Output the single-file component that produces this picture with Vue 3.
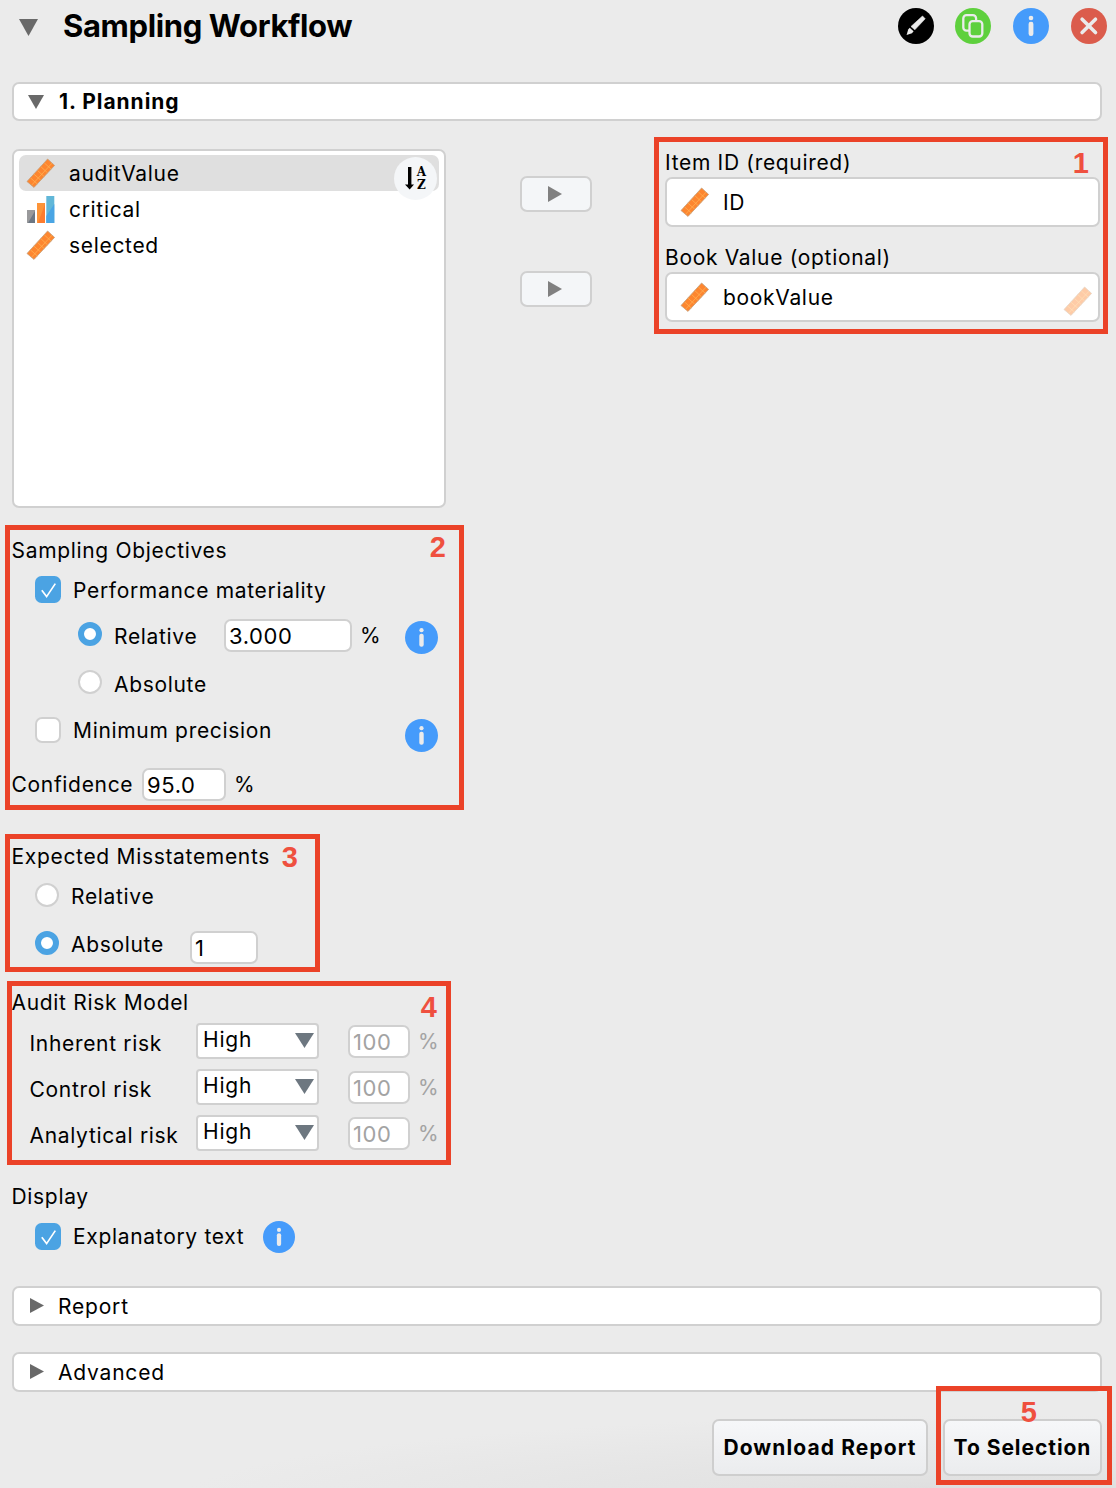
<script setup>
import { h } from 'vue'

const variables = [
  { name: 'auditValue', type: 'scale', active: true },
  { name: 'critical', type: 'ordinal', active: false },
  { name: 'selected', type: 'scale', active: false },
]
const fields = [
  { label: 'Item ID (required)', value: 'ID', hint: false },
  { label: 'Book Value (optional)', value: 'bookValue', hint: true },
]
const risks = ['Inherent risk', 'Control risk', 'Analytical risk']

const ScaleIcon = () =>
  h('svg', { width: 30, height: 30, viewBox: '0 0 30 30' }, [
    h('path', { d: 'M1 23.5 21.6 1 28.6 7.4 8 29.4Z', fill: '#fd8630' }),
    h('path', {
      d: 'M5.6 27.2 26.2 5M4.4 19.8 11.4 26M7.8 16 14.9 22.3M11.3 12.3 18.3 18.7M14.7 8.5 21.7 15M18.2 4.8 25.2 11.2',
      fill: 'none',
      stroke: '#ffb052',
      'stroke-width': 0.8,
    }),
    h('path', { d: 'M1 23.5 21.6 1 28.6 7.4 8 29.4Z', fill: 'none', stroke: '#c4a07c', 'stroke-width': 0.8 }),
  ])

const InfoIcon = (props) =>
  h('svg', { width: props.size, height: props.size, viewBox: '0 0 36 36' }, [
    h('circle', { cx: 18, cy: 18, r: 18, fill: '#459bfb' }),
    h('circle', { cx: 18, cy: 10, r: 2.3, fill: '#ebebeb' }),
    h('rect', { x: 15.6, y: 13.8, width: 4.8, height: 14.2, rx: 2.2, fill: '#ebebeb' }),
  ])
InfoIcon.props = ['size']

const CheckMark = () =>
  h('svg', { width: 26, height: 27, viewBox: '0 0 26 27' }, [
    h('rect', { width: 26, height: 27, rx: 6.5, fill: '#4ba3e3' }),
    h('path', { d: 'M6.8 14.3 11.6 20.6 20.3 7.6', fill: 'none', stroke: '#fff', 'stroke-width': 1.7 }),
  ])
</script>

<template>
  <main class="panel">
    <header class="header">
      <svg class="title-arrow" width="19" height="17" viewBox="0 0 19 17"><path d="M0 0H19L9.5 17Z" fill="#696969" /></svg>
      <h1>Sampling Workflow</h1>
      <div class="tools">
        <svg class="edit" width="36" height="36" viewBox="0 0 36 36">
          <circle cx="18" cy="18" r="18" />
          <path d="M24.5 8 27.2 10.8 16.8 21.8 13 18.5Z" fill="#ebebeb" stroke="#ebebeb" stroke-width=".6" stroke-linejoin="round" />
          <path d="M11.7 19.7 15.6 23.2 14 25.3 8.6 27 10.2 21.4Z" fill="#ebebeb" />
        </svg>
        <svg width="36" height="36" viewBox="0 0 36 36">
          <circle cx="18" cy="18" r="18" fill="#5ed03d" />
          <g fill="#5ed03d" stroke="#ebebeb" stroke-width="2.3">
            <rect x="8.3" y="7.2" width="12.8" height="15.4" rx="3.2" />
            <rect x="14.5" y="13.1" width="12.8" height="15.4" rx="3.2" />
          </g>
        </svg>
        <InfoIcon :size="36" />
        <svg width="36" height="36" viewBox="0 0 36 36">
          <circle cx="18" cy="18" r="18" fill="#db5c4c" />
          <path d="M11.1 11.2 24.5 24.6M24.5 11.2 11.1 24.6" stroke="#ebebeb" stroke-width="3.6" stroke-linecap="round" />
        </svg>
      </div>
    </header>

    <section class="bar planning">
      <svg width="16" height="14" viewBox="0 0 16 14"><path d="M0 0H16L8 14Z" fill="#696969" /></svg>
      <b>1. Planning</b>
    </section>

    <section class="assign">
      <div class="list">
        <div v-for="v in variables" :key="v.name" class="variable" :class="{ active: v.active }">
          <ScaleIcon v-if="v.type === 'scale'" />
          <svg v-else width="30" height="30" viewBox="0 0 30 30">
            <path d="M1 16H9V29H1Z" fill="#99999b" /><path d="M9 17V29H2Z" fill="#6d7783" />
            <path d="M11 9H19V29H11Z" fill="#fd9438" /><path d="M19 10V29H12Z" fill="#fd7c2e" />
            <path d="M20.3 2H28.3V29H20.3Z" fill="#61b7d8" /><path d="M28.3 10V29H20.3V22Z" fill="#4aa5e4" />
          </svg>
          <span>{{ v.name }}</span>
        </div>
        <div class="sort">
          <svg width="9" height="23" viewBox="0 0 9 23"><path d="M3 0H6.4V17.5H9L4.7 22.5 0 17.5H3Z" /></svg>
          <span class="az"><i>A</i><i>Z</i></span>
        </div>
      </div>

      <div class="movers">
        <button v-for="f in fields" :key="f.value" class="move">
          <svg width="14" height="16" viewBox="0 0 14 16"><path d="M0 0 14 8 0 16Z" fill="#808080" /></svg>
        </button>
      </div>

      <div class="targets">
        <div v-for="f in fields" :key="f.value" class="target">
          <label>{{ f.label }}</label>
          <div class="drop">
            <ScaleIcon />
            <span>{{ f.value }}</span>
            <ScaleIcon v-if="f.hint" class="hint" />
          </div>
        </div>
        <div class="callout c1"><em>1</em></div>
      </div>
    </section>

    <section class="objectives">
      <h2>Sampling Objectives</h2>
      <div class="row perf"><CheckMark class="check" /><span>Performance materiality</span></div>
      <div class="row rel">
        <i class="radio on"></i><span class="rel-label">Relative</span>
        <div class="input wide">3.000</div><span class="pct">%</span>
        <InfoIcon class="info" :size="33" />
      </div>
      <div class="row abs"><i class="radio"></i><span>Absolute</span></div>
      <div class="row min"><i class="box"></i><span class="min-label">Minimum precision</span><InfoIcon class="info low" :size="33" /></div>
      <div class="row conf"><span class="conf-label">Confidence</span><div class="input mid">95.0</div><span class="pct">%</span></div>
      <div class="callout c2"><em>2</em></div>
    </section>

    <section class="expected">
      <h2>Expected Misstatements</h2>
      <div class="row erel"><i class="radio"></i><span>Relative</span></div>
      <div class="row eabs"><i class="radio on"></i><span class="eabs-label">Absolute</span><div class="input small">1</div></div>
      <div class="callout c3"><em>3</em></div>
    </section>

    <section class="audit">
      <h2>Audit Risk Model</h2>
      <div v-for="r in risks" :key="r" class="risk">
        <span class="risk-label">{{ r }}</span>
        <div class="select"><span>High</span><svg width="19" height="15" viewBox="0 0 19 15"><path d="M0 0H19L9.5 15Z" fill="#6d7780" /></svg></div>
        <div class="input disabled">100</div>
        <span class="pct muted">%</span>
      </div>
      <div class="callout c4"><em>4</em></div>
    </section>

    <section class="display">
      <h2>Display</h2>
      <div class="row expl"><CheckMark class="check" /><span class="expl-label">Explanatory text</span><InfoIcon :size="32" /></div>
    </section>

    <section v-for="s in ['Report', 'Advanced']" :key="s" class="bar closed">
      <svg width="14" height="15" viewBox="0 0 14 15"><path d="M0 0 14 7.5 0 15Z" fill="#696969" /></svg>
      <span>{{ s }}</span>
    </section>

    <footer class="actions">
      <button class="action download">Download Report</button>
      <button class="action next">To Selection</button>
      <div class="callout c5"><em>5</em></div>
    </footer>
  </main>
</template>

<style>
body {
  margin: 0;
  background: #ebebeb;
}
</style>

<style scoped>
* {
  box-sizing: border-box;
}
.panel {
  width: 1116px;
  height: 1488px;
  overflow: hidden;
  padding: 0 14px 0 12px;
  font-family: Inter, "Liberation Sans", sans-serif;
  font-size: 21px;
  line-height: 28px;
  letter-spacing: 0.68px;
  color: #000;
  white-space: nowrap;
  background: radial-gradient(ellipse 820px 85px at 1000px 1500px, #dcdcdc 0%, #e3e3e3 35%, #ebebeb 100%) #ebebeb;
}
svg {
  display: block;
  flex: none;
}
h1, h2 {
  margin: 0;
}
h1 {
  font-size: 31px;
  line-height: 52px;
  font-weight: 700;
  letter-spacing: -0.37px;
}
h2 {
  height: 28px;
  padding-top: 1px;
  text-indent: -0.5px;
  font-size: 21px;
  font-weight: 400;
  line-height: 28px;
}
.header {
  display: flex;
  align-items: center;
  height: 52px;
  margin-right: -5px;
  padding-left: 7px;
}
.title-arrow {
  margin: 3px 25px 0 0;
}
.tools {
  display: flex;
  gap: 22px;
  margin-left: auto;
}
.edit {
  margin-right: -1px;
}
.bar {
  display: flex;
  align-items: center;
  height: 40px;
  border: 2px solid #d0d0d0;
  border-radius: 7px;
  background: #fff;
}
.planning {
  height: 39px;
  margin-top: 30px;
  padding-left: 14px;
  gap: 15px;
  letter-spacing: 0.95px;
}
.closed {
  margin-top: 26px;
  padding-left: 16px;
  gap: 14px;
  letter-spacing: 0.8px;
}
.closed span {
  padding-top: 2px;
}
.closed svg {
  margin-top: -1px;
}
.display + .closed {
  margin-top: 23px;
}
.assign {
  display: flex;
  height: 359px;
  margin-top: 28px;
}
.list {
  position: relative;
  width: 434px;
  padding: 4px 5px;
  border: 2px solid #d0d0d0;
  border-radius: 7px;
  background: #fff;
}
.variable {
  display: flex;
  align-items: center;
  gap: 13px;
  height: 36px;
  padding-left: 7px;
  border-radius: 7px;
}
.variable span, .drop span {
  padding-top: 2px;
}
.active {
  background: #dfdfdf;
}
.sort {
  position: absolute;
  top: 6px;
  right: 7px;
  display: flex;
  align-items: center;
  justify-content: center;
  gap: 3px;
  width: 43px;
  height: 43px;
  border-radius: 50%;
  background: #f4f6f8;
}
.az {
  display: grid;
  font: 700 12px/12.5px "DejaVu Serif", serif;
  letter-spacing: 0;
}
.az i {
  font-style: normal;
  text-align: center;
}
.movers {
  display: flex;
  flex-direction: column;
  gap: 59px;
  margin: 27px 0 0 74px;
}
.move {
  display: flex;
  align-items: center;
  justify-content: center;
  width: 72px;
  height: 36px;
  padding: 0 2px 0 0;
  border: 2px solid #d0d0d0;
  border-radius: 7px;
  background: #f4f6f8;
}
.targets {
  position: relative;
  width: 435px;
  height: 174px;
  margin: -1px 0 0 73px;
}
.target {
  height: 95px;
}
.target label {
  display: block;
  height: 29px;
  padding-top: 1px;
}
.drop {
  display: flex;
  align-items: center;
  gap: 13px;
  height: 50px;
  padding: 0 5px 0 13px;
  border: 2px solid #d0d0d0;
  border-radius: 7px;
  background: #fff;
}
.hint {
  margin: 7px 0 0 auto;
  opacity: 0.42;
}
.objectives, .expected, .audit, .actions {
  position: relative;
}
.objectives {
  margin-top: 28px;
}
.row, .risk {
  display: flex;
  align-items: center;
}
.check {
  margin: -1px 12px 0 23px;
}
.perf { height: 52px; }
.rel { height: 40px; }
.abs { height: 56px; }
.min { height: 38px; }
.conf { height: 68px; }
.perf span, .rel-label, .abs span, .conf-label, .risk-label {
  padding-top: 2px;
}
.radio {
  width: 24px;
  height: 24px;
  margin: -4px 12px 0 66px;
  border: 2px solid #d0d0d0;
  border-radius: 50%;
  background: #fff;
}
.radio.on {
  border: 6px solid #4ba3e3;
}
.rel-label {
  width: 110px;
}
.box {
  width: 26px;
  height: 26px;
  margin: -3px 12px 0 23px;
  border: 2px solid #d0d0d0;
  border-radius: 7px;
  background: #fff;
}
.input {
  height: 33px;
  padding-left: 3px;
  border: 2px solid #d0d0d0;
  border-radius: 7px;
  background: #fff;
  font-size: 22px;
  line-height: 31px;
  letter-spacing: 0.6px;
}
.wide { width: 128px; margin-top: -1px; }
.mid { width: 84px; margin-top: 1px; }
.small { width: 68px; margin-top: 4px; }
.disabled { width: 62px; margin-left: 29px; margin-top: -4px; color: #a3a3a3; }
.pct {
  width: 45px;
  margin-left: 8px;
}
.conf .pct {
  padding-top: 1px;
}
.min-label {
  width: 332px;
}
.info {
  margin-top: 2px;
}
.low {
  margin-top: 9px;
}
.conf-label {
  width: 130px;
  text-indent: -0.5px;
}
.expected {
  margin-top: 24px;
}
.expected .radio {
  margin-left: 23px;
}
.erel { height: 53px; }
.eabs { height: 44px; }
.eabs-label {
  width: 119px;
}
.audit {
  margin-top: 21px;
}
.audit h2 {
  margin-bottom: 4px;
}
.risk {
  height: 46px;
  padding-left: 17.5px;
}
.risk-label {
  width: 166.5px;
}
.select {
  display: flex;
  align-items: center;
  justify-content: space-between;
  width: 123px;
  height: 36px;
  margin-top: -5px;
  padding: 0 3px 0 5px;
  border: 2px solid #d0d0d0;
  border-radius: 4px;
  background: #fff;
}
.select span {
  padding-bottom: 1px;
  font-size: 21px;
  letter-spacing: 0.8px;
}
.muted {
  margin-top: -3px;
  color: #a3a3a3;
}
.display {
  margin-top: 24px;
}
.expl { height: 53px; }
.expl-label {
  width: 190px;
}
.actions {
  display: flex;
  justify-content: flex-end;
  gap: 15px;
  margin-top: 27px;
}
.action {
  height: 57px;
  padding: 0;
  border: 2px solid #cecece;
  border-radius: 7px;
  background: linear-gradient(#f6f7f9, #ebecee);
  font: 700 21px Inter, sans-serif;
  letter-spacing: 1.1px;
  color: #000;
}
.download { width: 216px; }
.next { width: 159px; letter-spacing: 0.95px; }
.callout {
  position: absolute;
  border: 5px solid #eb4228;
}
.callout em {
  position: absolute;
  font: 700 29px/30px "Liberation Sans", sans-serif;
  letter-spacing: 0;
  color: #ef503f;
}
.c1 { left: -11px; top: -11px; width: 454px; height: 197px; }
.c1 em { right: 14px; top: 6px; }
.c2 { left: -7px; top: -11px; width: 459px; height: 285px; }
.c2 em { right: 13px; top: 2px; }
.c3 { left: -7px; top: -8px; width: 315px; height: 138px; }
.c3 em { right: 17px; top: 3px; }
.c4 { left: -5px; top: -7px; width: 444px; height: 184px; }
.c4 em { right: 9px; top: 6px; }
.c5 { right: -10px; top: -33px; width: 176px; height: 99px; }
.c5 em { right: 70px; top: 6px; }
</style>
